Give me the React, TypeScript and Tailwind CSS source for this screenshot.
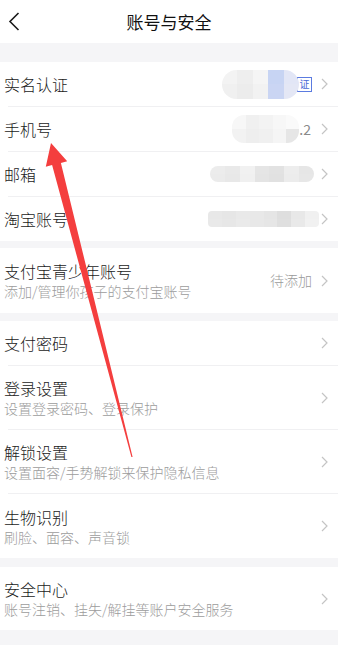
import type { ReactNode } from 'react';

const font = { fontFamily: '"Noto Sans CJK SC", "Noto Sans", sans-serif' };

function Chevron() {
    return (
        <svg width="7" height="12" viewBox="0 0 7 12" className="shrink-0">
            <path d="M1 1 L6 6 L1 11" fill="none" stroke="#c4c4c4" strokeWidth="1.2" />
        </svg>
    );
}

// pixelated blur that hides the private values
function Mosaic({ cols, className }: { cols: [string, string][]; className: string }) {
    return (
        <div className={`flex overflow-hidden blur-[0.6px] ${className}`}>
            {cols.map(([top, bottom], i) => (
                <div key={i} className="flex flex-1 flex-col">
                    <div className={`flex-1 ${top}`} />
                    <div className={`flex-1 ${bottom}`} />
                </div>
            ))}
        </div>
    );
}

function Row({ title, sub, right, className }: { title: string; sub?: string; right?: ReactNode; className: string }) {
    return (
        <div className={`flex items-center bg-white pl-[4px] pr-[10px] ${className}`}>
            <div className="flex min-w-0 flex-1 flex-col">
                <span className="text-[16px] font-light leading-[20px] text-[#1a1a1a]">{title}</span>
                {sub && <span className="mt-[1px] text-[14px] font-light leading-[18px] text-[#9c9c9c]">{sub}</span>}
            </div>
            <div className="flex items-center">
                {right}
                <Chevron />
            </div>
        </div>
    );
}

function Divider() {
    return (
        <div className="bg-white pl-[8px]">
            <div className="h-px bg-[#f0f0f2]" />
        </div>
    );
}

export default function App() {
    return (
        <div className="relative h-[645px] w-[338px] overflow-hidden bg-[#f5f5f7]" style={font}>
            {/* Header */}
            <div className="grid h-[43px] grid-cols-[40px_1fr_40px] items-center bg-white">
                <div className="pl-[8px]">
                    <svg width="12" height="19" viewBox="0 0 12 19">
                        <path d="M10.5 1 L2 9.5 L10.5 18" fill="none" stroke="#1a1a1a" strokeWidth="1.6" />
                    </svg>
                </div>
                <h1 className="text-center text-[17px] text-[#111]">账号与安全</h1>
                <div />
            </div>

            <div className="h-[19px]" />

            <Row
                title="实名认证"
                className="h-[44px]"
                right={
                    <div className="mr-[9px] flex items-center">
                        <Mosaic
                            className="h-[29px] w-[77px] rounded-full"
                            cols={[
                                ['bg-[#f3f3f3]', 'bg-[#f0f0f0]'],
                                ['bg-[#eeeeee]', 'bg-[#ececec]'],
                                ['bg-[#f5f5f5]', 'bg-[#f2f2f2]'],
                                ['bg-[#c7d4f3]', 'bg-[#cad5f3]'],
                                ['bg-[#e2e6f6]', 'bg-[#e4e7f5]'],
                            ]}
                        />
                        <span className="-ml-[2px] flex h-[15px] w-[15px] items-center justify-center border border-[#5b7be0] text-[10px] leading-none text-[#4a6bd6]">
                            证
                        </span>
                    </div>
                }
            />
            <Divider />
            <Row
                title="手机号"
                className="h-[44px]"
                right={
                    <div className="mr-[10px] flex items-center">
                        <Mosaic
                            className="h-[28px] w-[67px] rounded-[12px]"
                            cols={[
                                ['bg-[#f7f7f7]', 'bg-[#f2f2f2]'],
                                ['bg-[#f0f0f0]', 'bg-[#eeeeee]'],
                                ['bg-[#f3f3f3]', 'bg-[#f0f0f0]'],
                                ['bg-[#f7f7f7]', 'bg-[#f5f5f5]'],
                                ['bg-[#fafafa]', 'bg-[#e6e6e6]'],
                            ]}
                        />
                        <span className="text-[14px] leading-none text-[#8a8a8a]">.2</span>
                    </div>
                }
            />
            <Divider />
            <Row
                title="邮箱"
                className="h-[44px]"
                right={
                    <Mosaic
                        className="mr-[7px] h-[16px] w-[104px] rounded-full"
                        cols={[
                            ['bg-[#ececec]', 'bg-[#ebebeb]'],
                            ['bg-[#e9e9e9]', 'bg-[#e8e8e8]'],
                            ['bg-[#f1f1f1]', 'bg-[#f0f0f0]'],
                            ['bg-[#e5e5e5]', 'bg-[#e4e4e4]'],
                            ['bg-[#e2e2e2]', 'bg-[#e1e1e1]'],
                            ['bg-[#ededed]', 'bg-[#ececec]'],
                            ['bg-[#e6e6e6]', 'bg-[#e7e7e7]'],
                        ]}
                    />
                }
            />
            <Divider />
            <Row
                title="淘宝账号"
                className="h-[44px]"
                right={
                    <Mosaic
                        className="mr-[2px] h-[16px] w-[111px] rounded-[4px]"
                        cols={[
                            ['bg-[#e8e8e8]', 'bg-[#e9e9e9]'],
                            ['bg-[#e6e6e6]', 'bg-[#e7e7e7]'],
                            ['bg-[#e9e9e9]', 'bg-[#eaeaea]'],
                            ['bg-[#e8e8e8]', 'bg-[#e8e8e8]'],
                            ['bg-[#e5e5e5]', 'bg-[#e6e6e6]'],
                            ['bg-[#dedede]', 'bg-[#dfdfdf]'],
                            ['bg-[#e8e8e8]', 'bg-[#e9e9e9]'],
                            ['bg-[#f0f0f0]', 'bg-[#f1f1f1]'],
                        ]}
                    />
                }
            />

            <div className="h-[7px]" />

            <Row
                title="支付宝青少年账号"
                sub="添加/管理你孩子的支付宝账号"
                className="h-[65px]"
                right={<span className="mr-[9px] text-[14px] font-light text-[#9a9a9a]">待添加</span>}
            />

            <div className="h-[8px]" />

            <Row title="支付密码" className="h-[44px]" />
            <Divider />
            <Row title="登录设置" sub="设置登录密码、登录保护" className="h-[63px]" />
            <Divider />
            <Row title="解锁设置" sub="设置面容/手势解锁来保护隐私信息" className="h-[63px]" />
            <Divider />
            <Row title="生物识别" sub="刷脸、面容、声音锁" className="h-[64px]" />

            <div className="h-[9px]" />

            <Row title="安全中心" sub="账号注销、挂失/解挂等账户安全服务" className="h-[63px]" />

            {/* annotation arrow drawn over the page */}
            <svg className="pointer-events-none absolute inset-0" width="338" height="645" viewBox="0 0 338 645">
                <polygon
                    points="51,143 67.2,161.3 60.9,162.9 132.6,457 131.4,457.1 52.1,165.1 45.8,166.7"
                    fill="#f43e3e"
                />
            </svg>
        </div>
    );
}
